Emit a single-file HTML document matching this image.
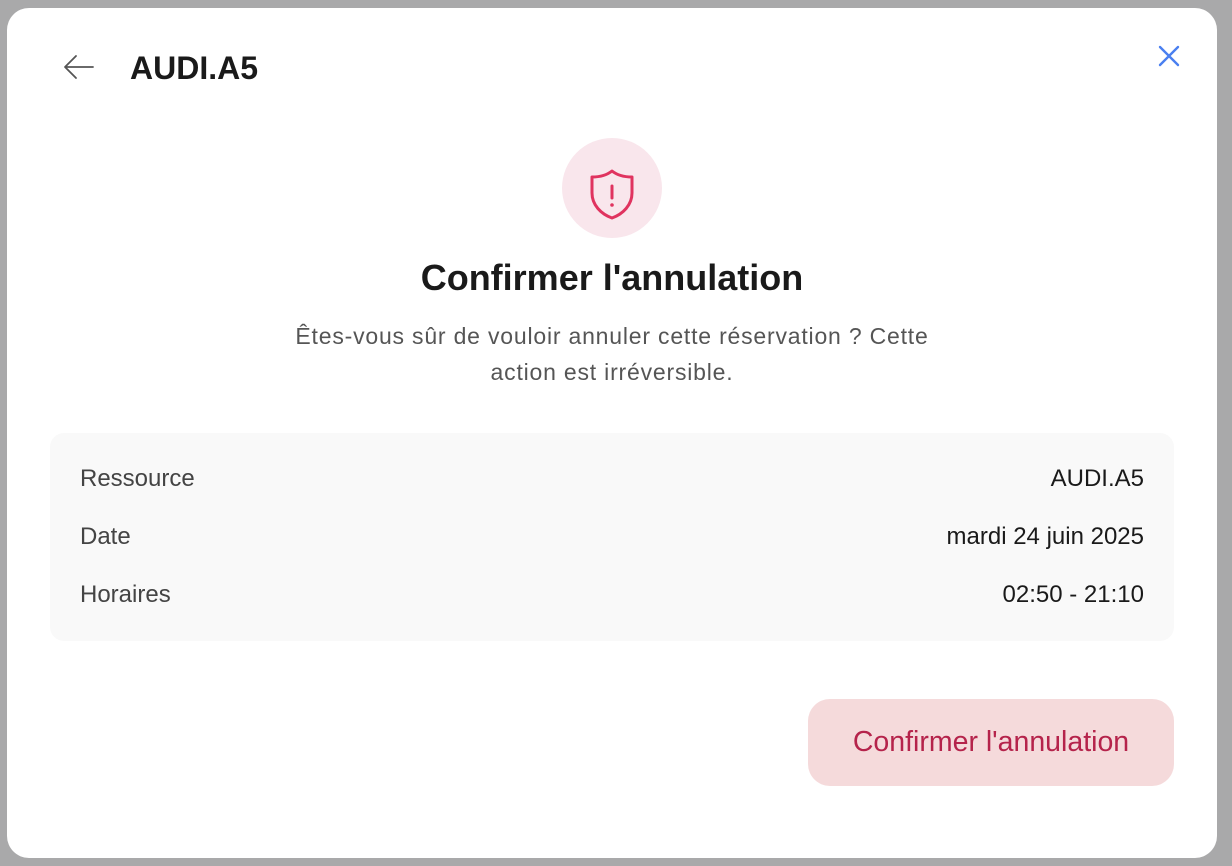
<!DOCTYPE html>
<html><head><meta charset="utf-8"><style>
*{margin:0;padding:0;box-sizing:border-box}
html,body{width:1232px;height:866px;overflow:hidden;background:#a9a9aa;font-family:"Liberation Sans",Arial,sans-serif}
.card{position:absolute;left:7px;top:8px;width:1210px;height:850px;background:#fff;border-radius:22px}
.abs{position:absolute}
.title{left:123px;top:42px;font-size:32px;font-weight:bold;color:#1a1a1a}
.circle{left:555px;top:130px;width:100px;height:100px;border-radius:50%;background:#f9e6ec}
.h{left:0;width:1210px;top:249px;text-align:center;font-size:36px;font-weight:bold;color:#1a1a1a}
.p{left:265px;width:680px;top:310px;text-align:center;font-size:23px;letter-spacing:0.8px;line-height:36px;color:#555}
.box{left:43px;top:425px;width:1124px;height:208px;background:#f9f9f9;border-radius:14px}
.row{position:absolute;left:30px;right:30px;font-size:24px;color:#444;display:flex;justify-content:space-between}
.row span:last-child{color:#1a1a1a}
.btn{left:801px;top:691px;width:366px;height:87px;border-radius:22px;background:#f5dadb;color:#b5234b;font-size:28.5px;display:flex;align-items:center;justify-content:center}
</style></head><body>
<div class="card">
<svg class="abs" style="left:55px;top:45px" width="34" height="28" viewBox="0 0 34 28"><path d="M31 14H3M14 3L3 14l11 11" fill="none" stroke="#555" stroke-width="1.8" stroke-linecap="round" stroke-linejoin="round"/></svg>
<div class="abs title">AUDI.A5</div>
<svg class="abs" style="left:1150px;top:36px" width="24" height="24" viewBox="0 0 24 24"><path d="M3 3L21 21M21 3L3 21" stroke="#4a7ff0" stroke-width="2.4" stroke-linecap="round"/></svg>
<div class="abs circle"></div>
<svg class="abs" style="left:580px;top:157px" width="50" height="58" viewBox="0 0 50 58"><path d="M25 6C20 10 14 12 5 12V28C5 40 14 49 25 53C36 49 45 40 45 28V12C36 12 30 10 25 6Z" fill="none" stroke="#e0335f" stroke-width="3" stroke-linejoin="round"/><path d="M25 21V33" stroke="#e0335f" stroke-width="3" stroke-linecap="round"/><circle cx="25" cy="40" r="1.8" fill="#e0335f"/></svg>
<div class="abs h">Confirmer l'annulation</div>
<div class="abs p">Êtes-vous sûr de vouloir annuler cette réservation ? Cette action est irréversible.</div>
<div class="abs box">
<div class="row" style="top:32px"><span>Ressource</span><span>AUDI.A5</span></div>
<div class="row" style="top:90px"><span>Date</span><span>mardi 24 juin 2025</span></div>
<div class="row" style="top:148px"><span>Horaires</span><span>02:50 - 21:10</span></div>
</div>
<div class="abs btn">Confirmer l'annulation</div>
</div>
</body></html>
